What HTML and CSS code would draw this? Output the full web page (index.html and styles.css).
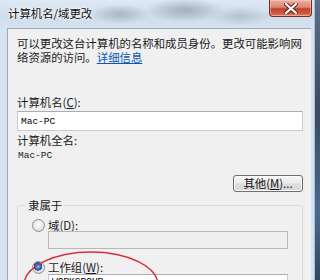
FILE: index.html
```html
<!DOCTYPE html>
<html lang="zh-CN">

<head>
    <meta charset="UTF-8">
    <meta name="viewport" content="width=device-width, initial-scale=1.0">
    <title>计算机名/域更改</title>
    <link rel="stylesheet" href="styles.css">
</head>

<body>
    <div class="window">
        <div class="titlebar">
            <span class="title">计算机名/域更改</span>
            <button class="close" aria-label="关闭">
                <svg width="14" height="11" viewBox="0 0 14 11">
                    <path d="M2 1 L12 10 M12 1 L2 10" stroke="#5a1c14" stroke-width="4" stroke-linecap="square" />
                    <path d="M2 1 L12 10 M12 1 L2 10" stroke="#ffffff" stroke-width="2.2" stroke-linecap="square" />
                </svg>
            </button>
        </div>

        <div class="frame">
            <div class="client">
                <p class="intro">可以更改这台计算机的名称和成员身份。更改可能影响网络资源的访问。<a href="#">详细信息</a></p>

                <label class="label name-label" for="computerName">计算机名(<u>C</u>):</label>
                <input class="textbox" type="text" id="computerName" value="Mac-PC">

                <p class="label full-label">计算机全名:</p>
                <p class="full-name">Mac-PC</p>

                <div class="actions">
                    <button class="btn">其他(<u>M</u>)...</button>
                </div>

                <fieldset class="group">
                    <legend>隶属于</legend>
                    <label class="option first">
                        <input type="radio" name="member">
                        <span>域(<u>D</u>):</span>
                    </label>
                    <input class="textbox sub" type="text" disabled>

                    <label class="option second">
                        <input type="radio" name="member" checked>
                        <span>工作组(<u>W</u>):</span>
                    </label>
                    <input class="textbox sub workgroup" type="text" value="WORKGROUP">
                </fieldset>
            </div>
        </div>

        <svg class="annotation" width="150" height="80" viewBox="0 0 150 80">
            <ellipse cx="69" cy="35" rx="67" ry="33" fill="none" stroke="#d2333a" stroke-width="1.4" />
        </svg>
    </div>
</body>

</html>
```

FILE: styles.css
```css
* {
    box-sizing: border-box;
    margin: 0;
    padding: 0;
}

body {
    width: 320px;
    height: 280px;
    overflow: hidden;
    font-family: "Noto Sans CJK SC", "Noto Sans", sans-serif;
    font-size: 11.4px;
    line-height: 13px;
    color: #1a1a1a;
    background: linear-gradient(180deg, #5d6f86 0%, #3b4a5e 40%, #4d6a8c 75%, #34465c 100%);
}

.window {
    position: relative;
    display: flex;
    flex-direction: column;
    width: 315px;
    min-height: 300px;
    background: #d5e2ef;
    border-right: 1px solid #9fc0e2;
}

/* title bar with blurred aero glass */
.titlebar {
    flex-shrink: 0;
    display: flex;
    justify-content: space-between;
    align-items: flex-start;
    height: 28px;
    padding-left: 8px;
    background:
        radial-gradient(ellipse 30px 10px at 120px 14px, rgba(120, 135, 150, 0.45), transparent),
        radial-gradient(ellipse 40px 12px at 185px 10px, rgba(110, 125, 140, 0.5), transparent),
        radial-gradient(ellipse 30px 10px at 240px 16px, rgba(140, 155, 170, 0.4), transparent),
        linear-gradient(180deg, #dfe9f4 0%, #cfdcea 60%, #d6e2ee 100%);
}

.title {
    margin-top: 7px;
    font-size: 11.4px;
    line-height: 13px;
    color: #101010;
    text-shadow: 0 0 5px #ffffff, 0 0 3px #ffffff;
}

.close {
    display: flex;
    justify-content: center;
    align-items: center;
    width: 43px;
    height: 17px;
    margin-right: 2px;
    border: 1px solid #7e2a22;
    border-top: 0;
    border-radius: 0 0 4px 4px;
    background: linear-gradient(180deg, #eab0a2 0%, #dc8572 45%, #c4402c 55%, #cf5a42 85%, #e08a70 100%);
    box-shadow: inset 0 0 0 1px rgba(255, 220, 210, 0.45);
}

.frame {
    flex: 1;
    display: flex;
    padding: 0 3px 0 7px;
}

.client {
    flex: 1;
    display: flex;
    flex-direction: column;
    padding: 8px 8px 0 9px;
    background: #f0f0f0;
    border-top: 1px solid #9aabc0;
    border-left: 1px solid #9aabc0;
}

.intro {
    line-height: 13.5px;
}

.intro a {
    color: #0a58b8;
    text-decoration: underline;
}

.label {
    line-height: 13px;
}

.name-label {
    margin-top: 32px;
}

.textbox {
    height: 20px;
    padding: 0 3px;
    font-family: "Liberation Mono", "DejaVu Sans Mono", monospace;
    font-size: 9.5px;
    color: #000;
    background: #ffffff;
    border: 1px solid #c5ccd5;
    border-top-color: #a9aeb6;
    outline: none;
}

#computerName {
    margin-top: 2px;
}

.full-label {
    margin-top: 3px;
}

.full-name {
    margin-top: 3px;
    padding-left: 1px;
    font-family: "Liberation Mono", "DejaVu Sans Mono", monospace;
    font-size: 9.5px;
    line-height: 12px;
}

.actions {
    display: flex;
    justify-content: flex-end;
    margin-top: 13px;
}

.btn {
    width: 70px;
    height: 17px;
    font-family: "Noto Sans CJK SC", "Noto Sans", sans-serif;
    font-size: 11.4px;
    line-height: 13px;
    color: #111;
    background: linear-gradient(180deg, #f6f6f6 0%, #ececec 48%, #dcdcdc 52%, #d6d6d6 100%);
    border: 1px solid #707070;
    border-radius: 3px;
    box-shadow: inset 0 0 0 1px #fafafa;
}

.group {
    display: flex;
    flex-direction: column;
    margin-top: 7px;
    padding: 0 14px 20px 0;
    border: 1px solid #d5dbe0;
    border-radius: 3px;
}

.group legend {
    margin-left: 8px;
    padding: 0 2px;
    line-height: 13px;
}

.option {
    display: flex;
    align-items: center;
    gap: 3px;
    height: 12px;
    padding-left: 14px;
}

.option.first {
    margin-top: 7px;
}

.option.second {
    margin-top: 12px;
}

.option input {
    appearance: none;
    width: 13px;
    height: 13px;
    border: 1px solid #8c8f93;
    border-radius: 50%;
    background: radial-gradient(circle at 50% 40%, #fdfdfd 0%, #e8e8e8 55%, #c9cbcd 100%);
}

.option input:checked {
    background:
        radial-gradient(circle at 45% 40%, #9ed0ff 0%, #2f7fd6 25%, #17449a 45%, transparent 50%),
        radial-gradient(circle at 50% 40%, #fdfdfd 0%, #e8e8e8 55%, #c9cbcd 100%);
}

.textbox.sub {
    margin-left: 30px;
    height: 18px;
}

.textbox.sub:disabled {
    background: #efefef;
    border-color: #b8b8b8;
}

.textbox.workgroup {
    margin-top: 1px;
    padding-bottom: 3px;
}

/* hand drawn red ring over the workgroup option */
.annotation {
    position: absolute;
    left: 22px;
    top: 250px;
}
```
